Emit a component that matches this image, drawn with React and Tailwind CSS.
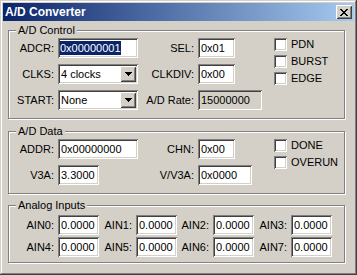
import React from "react";

const sunken =
  "shadow-[inset_1px_1px_#808080,inset_-1px_-1px_#fff,inset_2px_2px_#404040,inset_-2px_-2px_#d4d0c8]";
const raised =
  "shadow-[inset_1px_1px_#fff,inset_-1px_-1px_#404040,inset_2px_2px_#d4d0c8,inset_-2px_-2px_#808080]";

// Marlett-style close glyph, 8x7 pixels
const closeRows = ["11000011", "01100110", "00111100", "00011000", "00111100", "01100110", "11000011"];

function CloseGlyph() {
  return (
    <svg width="8" height="7" viewBox="0 0 8 7" shapeRendering="crispEdges">
      {closeRows.map((row, y) =>
        row.split("").map((c, x) =>
          c === "1" ? <rect key={`${x}-${y}`} x={x} y={y} width="1" height="1" fill="#000" /> : null
        )
      )}
    </svg>
  );
}

function DownArrow() {
  return (
    <svg width="7" height="4" viewBox="0 0 7 4" shapeRendering="crispEdges">
      <rect x="0" y="0" width="7" height="1" fill="#000" />
      <rect x="1" y="1" width="5" height="1" fill="#000" />
      <rect x="2" y="2" width="3" height="1" fill="#000" />
      <rect x="3" y="3" width="1" height="1" fill="#000" />
    </svg>
  );
}

function Field({ w, gray, children }) {
  return (
    <div className={`flex h-[20px] items-center pl-[3px] ${w} ${sunken} ${gray ? "bg-[#d4d0c8]" : "bg-white"}`}>
      {children}
    </div>
  );
}

function Combo({ value }) {
  return (
    <div className={`flex h-[20px] w-[80px] items-center bg-white p-[2px] ${sunken}`}>
      <span className="flex-1 pl-[1px]">{value}</span>
      <div className={`flex h-[16px] w-[16px] items-center justify-center bg-[#d4d0c8] ${raised}`}>
        <DownArrow />
      </div>
    </div>
  );
}

function Row({ label, lw, children }) {
  return (
    <div className="flex h-[20px] items-center">
      <span className={`${lw} text-right`}>{label}</span>
      <div className="ml-[4px]">{children}</div>
    </div>
  );
}

function Check({ label }) {
  return (
    <div className="flex h-[13px] items-center">
      <div className={`h-[13px] w-[13px] bg-white ${sunken}`} />
      <span className="ml-[4px]">{label}</span>
    </div>
  );
}

function Group({ title, className, children }) {
  return (
    <div
      className={`relative ml-[5px] w-[337px] border border-[#808080] shadow-[1px_1px_0_#fff,inset_1px_1px_0_#fff] ${className}`}
    >
      <span className="absolute left-[7px] top-[-7px] bg-[#d4d0c8] px-[2px] leading-[13px]">{title}</span>
      {children}
    </div>
  );
}

export default function App() {
  const ains = [
    ["AIN0:", "w-[45px]"],
    ["AIN1:", "w-[33px]"],
    ["AIN2:", "w-[32px]"],
    ["AIN3:", "w-[33px]"],
  ];
  const ains2 = [
    ["AIN4:", "w-[45px]"],
    ["AIN5:", "w-[33px]"],
    ["AIN6:", "w-[32px]"],
    ["AIN7:", "w-[33px]"],
  ];

  return (
    <div
      className={`flex h-[275px] w-[357px] flex-col bg-[#d4d0c8] p-[3px] font-['Liberation_Sans',Arial,sans-serif] text-[11px] leading-[13px] text-black shadow-[inset_-1px_-1px_#404040,inset_1px_1px_#d4d0c8,inset_-2px_-2px_#808080,inset_2px_2px_#fff]`}
    >
      {/* title bar */}
      <div className="flex h-[18px] items-center bg-linear-to-r/srgb from-[#0a246a] to-[#a6caf0] pl-[2px] pr-[2px]">
        <span className="flex-1 text-[12px] font-bold leading-none text-white">A/D Converter</span>
        <div className={`flex h-[14px] w-[16px] items-center justify-center bg-[#d4d0c8] ${raised}`}>
          <CloseGlyph />
        </div>
      </div>

      <Group title="A/D Control" className="mt-[9px] h-[89px]">
        <div className="flex pt-[7px]">
          <div className="flex w-[129px] flex-col gap-[6px]">
            <Row label="ADCR:" lw="w-[45px]">
              <div className={`flex h-[20px] w-[80px] items-center bg-white pl-[2px] ${sunken}`}>
                <span className="bg-[#0a246a] leading-[14px] text-white">0x00000001</span>
              </div>
            </Row>
            <Row label="CLKS:" lw="w-[45px]">
              <Combo value="4 clocks" />
            </Row>
            <Row label="START:" lw="w-[45px]">
              <Combo value="None" />
            </Row>
          </div>
          <div className="flex w-[136px] flex-col gap-[6px]">
            <Row label="SEL:" lw="w-[56px]">
              <Field w="w-[37px]">0x01</Field>
            </Row>
            <Row label="CLKDIV:" lw="w-[56px]">
              <Field w="w-[37px]">0x00</Field>
            </Row>
            <Row label="A/D Rate:" lw="w-[56px]">
              <Field w="w-[64px]" gray>
                15000000
              </Field>
            </Row>
          </div>
          <div className="flex flex-col gap-[4px]">
            <Check label="PDN" />
            <Check label="BURST" />
            <Check label="EDGE" />
          </div>
        </div>
      </Group>

      <Group title="A/D Data" className="mt-[12px] h-[63px]">
        <div className="flex pt-[7px]">
          <div className="flex w-[129px] flex-col gap-[6px]">
            <Row label="ADDR:" lw="w-[45px]">
              <Field w="w-[80px]">0x00000000</Field>
            </Row>
            <Row label="V3A:" lw="w-[45px]">
              <Field w="w-[41px]">3.3000</Field>
            </Row>
          </div>
          <div className="flex w-[136px] flex-col gap-[6px]">
            <Row label="CHN:" lw="w-[56px]">
              <Field w="w-[37px]">0x00</Field>
            </Row>
            <Row label="V/V3A:" lw="w-[56px]">
              <Field w="w-[54px]">0x0000</Field>
            </Row>
          </div>
          <div className="flex flex-col gap-[4px]">
            <Check label="DONE" />
            <Check label="OVERUN" />
          </div>
        </div>
      </Group>

      <Group title="Analog Inputs" className="mt-[11px] h-[58px]">
        <div className="flex flex-col gap-[2px] pt-[9px]">
          {[ains, ains2].map((row, i) => (
            <div key={i} className="flex">
              {row.map(([label, lw]) => (
                <Row key={label} label={label} lw={lw}>
                  <Field w="w-[41px]">0.0000</Field>
                </Row>
              ))}
            </div>
          ))}
        </div>
      </Group>
    </div>
  );
}
